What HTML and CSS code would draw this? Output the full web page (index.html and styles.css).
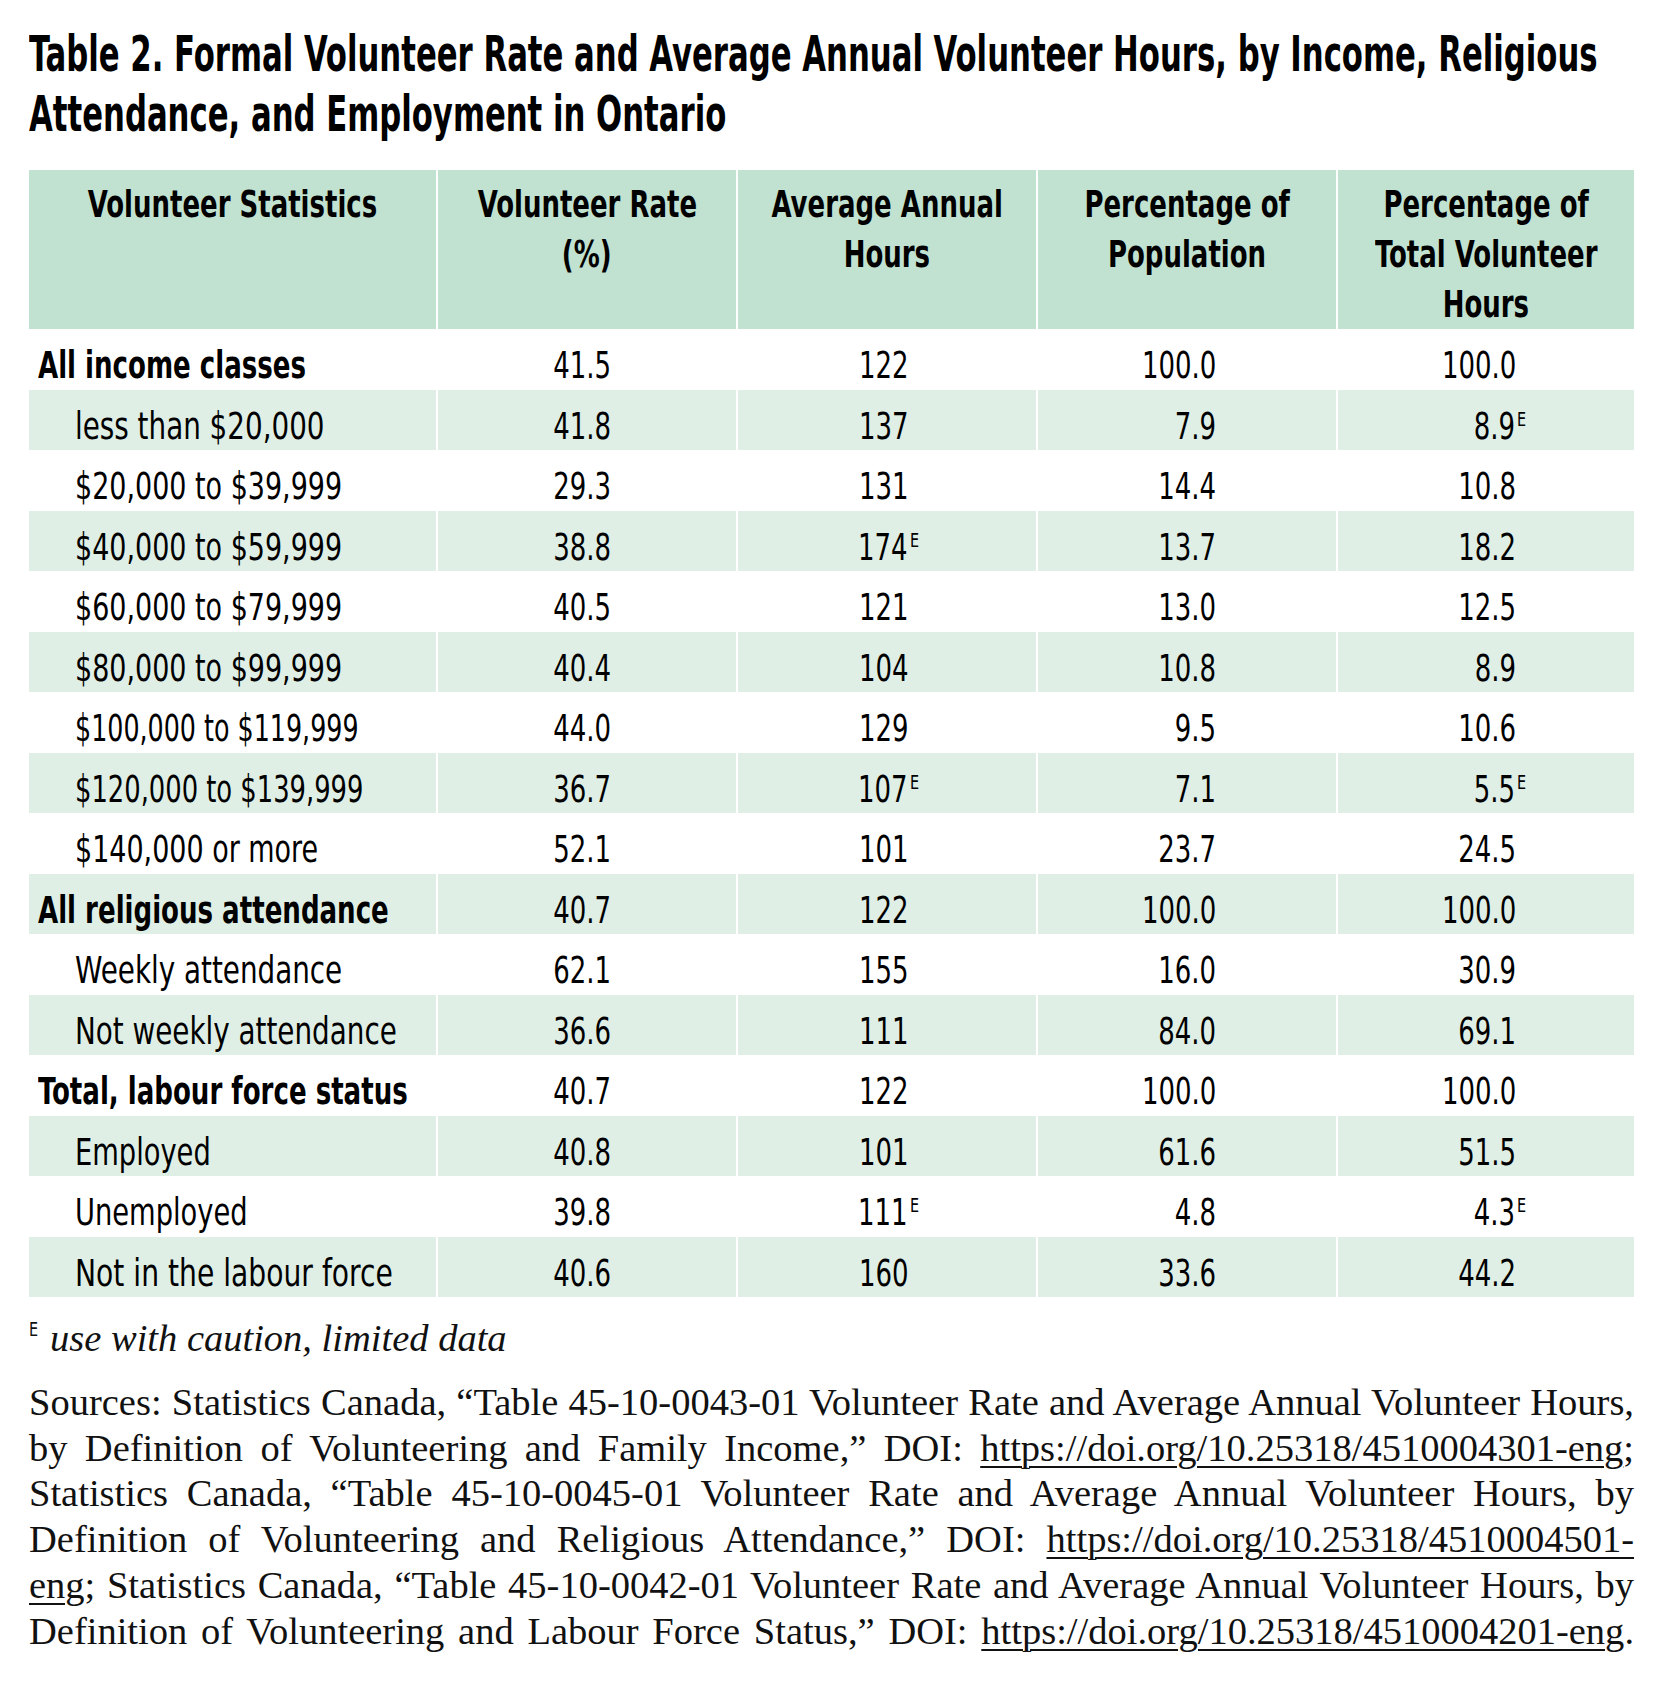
FILE: index.html
```html
<!DOCTYPE html>
<html lang="en">
<head>
<meta charset="utf-8">
<title>Table 2</title>
<link rel="stylesheet" href="styles.css">
</head>
<body>
<div class="page">
  <h1 class="title">
    <span class="tl">Table 2. Formal Volunteer Rate and Average Annual Volunteer Hours, by Income, Religious</span>
    <span class="tl">Attendance, and Employment in Ontario</span>
  </h1>

  <table class="stats">
    <colgroup>
      <col class="c1"><col class="c2"><col class="c3"><col class="c4"><col class="c5">
    </colgroup>
    <thead>
      <tr>
        <th><div class="hd"><span>Volunteer Statistics</span></div></th>
        <th><div class="hd"><span>Volunteer Rate</span><span>(%)</span></div></th>
        <th><div class="hd"><span>Average Annual</span><span>Hours</span></div></th>
        <th><div class="hd"><span>Percentage of</span><span>Population</span></div></th>
        <th><div class="hd"><span>Percentage of</span><span>Total Volunteer</span><span>Hours</span></div></th>
      </tr>
    </thead>
    <tbody>
      <tr class="group"><td><span class="lb">All income classes</span></td><td><span class="n">41.5</span></td><td><span class="n">122</span></td><td><span class="n">100.0</span></td><td><span class="n">100.0</span></td></tr>
      <tr class="alt"><td class="ind"><span class="lb lb-wide">less than $20,000</span></td><td><span class="n">41.8</span></td><td><span class="n">137</span></td><td><span class="n">7.9</span></td><td><span class="n">8.9</span><span class="e">E</span></td></tr>
      <tr><td class="ind"><span class="lb">$20,000 to $39,999</span></td><td><span class="n">29.3</span></td><td><span class="n">131</span></td><td><span class="n">14.4</span></td><td><span class="n">10.8</span></td></tr>
      <tr class="alt"><td class="ind"><span class="lb">$40,000 to $59,999</span></td><td><span class="n">38.8</span></td><td><span class="n">174</span><span class="e">E</span></td><td><span class="n">13.7</span></td><td><span class="n">18.2</span></td></tr>
      <tr><td class="ind"><span class="lb">$60,000 to $79,999</span></td><td><span class="n">40.5</span></td><td><span class="n">121</span></td><td><span class="n">13.0</span></td><td><span class="n">12.5</span></td></tr>
      <tr class="alt"><td class="ind"><span class="lb">$80,000 to $99,999</span></td><td><span class="n">40.4</span></td><td><span class="n">104</span></td><td><span class="n">10.8</span></td><td><span class="n">8.9</span></td></tr>
      <tr><td class="ind"><span class="lb lb-narrow">$100,000 to $119,999</span></td><td><span class="n">44.0</span></td><td><span class="n">129</span></td><td><span class="n">9.5</span></td><td><span class="n">10.6</span></td></tr>
      <tr class="alt"><td class="ind"><span class="lb lb-narrow2">$120,000 to $139,999</span></td><td><span class="n">36.7</span></td><td><span class="n">107</span><span class="e">E</span></td><td><span class="n">7.1</span></td><td><span class="n">5.5</span><span class="e">E</span></td></tr>
      <tr><td class="ind"><span class="lb">$140,000 or more</span></td><td><span class="n">52.1</span></td><td><span class="n">101</span></td><td><span class="n">23.7</span></td><td><span class="n">24.5</span></td></tr>
      <tr class="alt group"><td><span class="lb">All religious attendance</span></td><td><span class="n">40.7</span></td><td><span class="n">122</span></td><td><span class="n">100.0</span></td><td><span class="n">100.0</span></td></tr>
      <tr><td class="ind"><span class="lb lb-wide">Weekly attendance</span></td><td><span class="n">62.1</span></td><td><span class="n">155</span></td><td><span class="n">16.0</span></td><td><span class="n">30.9</span></td></tr>
      <tr class="alt"><td class="ind"><span class="lb lb-wide">Not weekly attendance</span></td><td><span class="n">36.6</span></td><td><span class="n">111</span></td><td><span class="n">84.0</span></td><td><span class="n">69.1</span></td></tr>
      <tr class="group"><td><span class="lb">Total, labour force status</span></td><td><span class="n">40.7</span></td><td><span class="n">122</span></td><td><span class="n">100.0</span></td><td><span class="n">100.0</span></td></tr>
      <tr class="alt"><td class="ind"><span class="lb lb-mid">Employed</span></td><td><span class="n">40.8</span></td><td><span class="n">101</span></td><td><span class="n">61.6</span></td><td><span class="n">51.5</span></td></tr>
      <tr><td class="ind"><span class="lb lb-mid">Unemployed</span></td><td><span class="n">39.8</span></td><td><span class="n">111</span><span class="e">E</span></td><td><span class="n">4.8</span></td><td><span class="n">4.3</span><span class="e">E</span></td></tr>
      <tr class="alt"><td class="ind"><span class="lb lb-wider">Not in the labour force</span></td><td><span class="n">40.6</span></td><td><span class="n">160</span></td><td><span class="n">33.6</span></td><td><span class="n">44.2</span></td></tr>
    </tbody>
  </table>

  <p class="note"><span class="note-e">E</span> <em>use with caution, limited data</em></p>

  <p class="sources">
    <span class="line">Sources: Statistics Canada, “Table 45-10-0043-01 Volunteer Rate and Average Annual Volunteer Hours,</span>
    <span class="line">by Definition of Volunteering and Family Income,” DOI: <a class="link" href="#">https://doi.org/10.25318/4510004301-eng</a>;</span>
    <span class="line">Statistics Canada, “Table 45-10-0045-01 Volunteer Rate and Average Annual Volunteer Hours, by</span>
    <span class="line">Definition of Volunteering and Religious Attendance,” DOI: <a class="link" href="#">https://doi.org/10.25318/4510004501-</a></span>
    <span class="line"><a class="link" href="#">eng</a>; Statistics Canada, “Table 45-10-0042-01 Volunteer Rate and Average Annual Volunteer Hours, by</span>
    <span class="line">Definition of Volunteering and Labour Force Status,” DOI: <a class="link" href="#">https://doi.org/10.25318/4510004201-eng</a>.</span>
  </p>
</div>
</body>
</html>
```

FILE: styles.css
```css
html, body {
  margin: 0;
  padding: 0;
  background: #ffffff;
}

.page {
  width: 1605px;
  margin-left: 29px;
  padding-top: 25px;
  color: #000;
}

/* condensed sans used by title and table */
.title,
.stats,
.note-e {
  font-family: "DejaVu Sans Condensed", "DejaVu Sans", sans-serif;
  font-stretch: condensed;
}

.title {
  margin: 0;
  font-weight: 700;
  font-size: 49px;
  line-height: 60px;
  color: #000;
}
.title .tl {
  display: block;
  white-space: nowrap;
  transform-origin: left center;
  transform: scaleX(0.697);
}

.stats {
  margin-top: 25px;
  margin-left: -2px;
  width: 1609px;
  table-layout: fixed;
  border-collapse: separate;
  border-spacing: 2px 0;
  color: #000;
}

.c1 { width: 407px; }
.c2 { width: 298px; }
.c3 { width: 298px; }
.c4 { width: 298px; }
.c5 { width: 296px; }

.stats th {
  height: 158px;
  box-sizing: border-box;
  background: #c1e2d1;
  vertical-align: top;
  padding: 9px 0 0;
  font-weight: 700;
  font-size: 38px;
  line-height: 50px;
  white-space: nowrap;
}
.hd {
  display: flex;
  flex-direction: column;
  align-items: center;
}
.hd span {
  display: block;
  transform-origin: center center;
  transform: scaleX(0.76);
}

.stats td {
  padding: 17px 0 3.5px;
  font-size: 37px;
  line-height: 40px;
  white-space: nowrap;
  vertical-align: top;
  text-align: right;
}

.stats td:nth-child(1) {
  text-align: left;
  padding-left: 9px;
}
.stats td.ind { padding-left: 46px; }
.stats td:nth-child(2) { padding-right: 125px; }
.stats td:nth-child(3) { padding-right: 127px; }
.stats td:nth-child(4) { padding-right: 120px; }
.stats td:nth-child(5) { padding-right: 118px; }

.stats tr.alt td { background: #dfefe6; }
.stats tr.group td:first-child { font-weight: 700; }

.lb {
  display: inline-block;
  transform-origin: left center;
  transform: scaleX(0.81);
}
.lb.lb-wide { transform: scaleX(0.835); }
.lb.lb-wider { transform: scaleX(0.847); }
.lb.lb-mid { transform: scaleX(0.82); }
.lb.lb-narrow { transform: scaleX(0.762); }
.lb.lb-narrow2 { transform: scaleX(0.775); }
.stats tr.group .lb { transform: scaleX(0.783); }

.n {
  display: inline-block;
  transform-origin: right center;
  transform: scaleX(0.78);
}

.e {
  display: inline-block;
  font-size: 20px;
  line-height: 0;
  vertical-align: 13px;
  margin-left: 2px;
  margin-right: -12px;
  transform-origin: left center;
  transform: scaleX(0.8);
}

.note {
  margin: 19px 0 0;
  font-family: "Liberation Serif", serif;
  font-size: 38.5px;
  line-height: 44px;
  color: #111;
}
.note-e {
  display: inline-block;
  font-size: 20px;
  line-height: 0;
  vertical-align: 15px;
  transform-origin: left center;
  transform: scaleX(0.8);
}
.note em { font-style: italic; }

.sources {
  margin: 20px 0 0;
  font-family: "Liberation Serif", serif;
  font-size: 38.5px;
  line-height: 45.7px;
  color: #111;
}
.sources .line {
  display: block;
  text-align: justify;
  text-align-last: justify;
}
.link {
  color: inherit;
  text-decoration: underline;
  text-decoration-thickness: 2px;
  text-underline-offset: 5px;
}
```
